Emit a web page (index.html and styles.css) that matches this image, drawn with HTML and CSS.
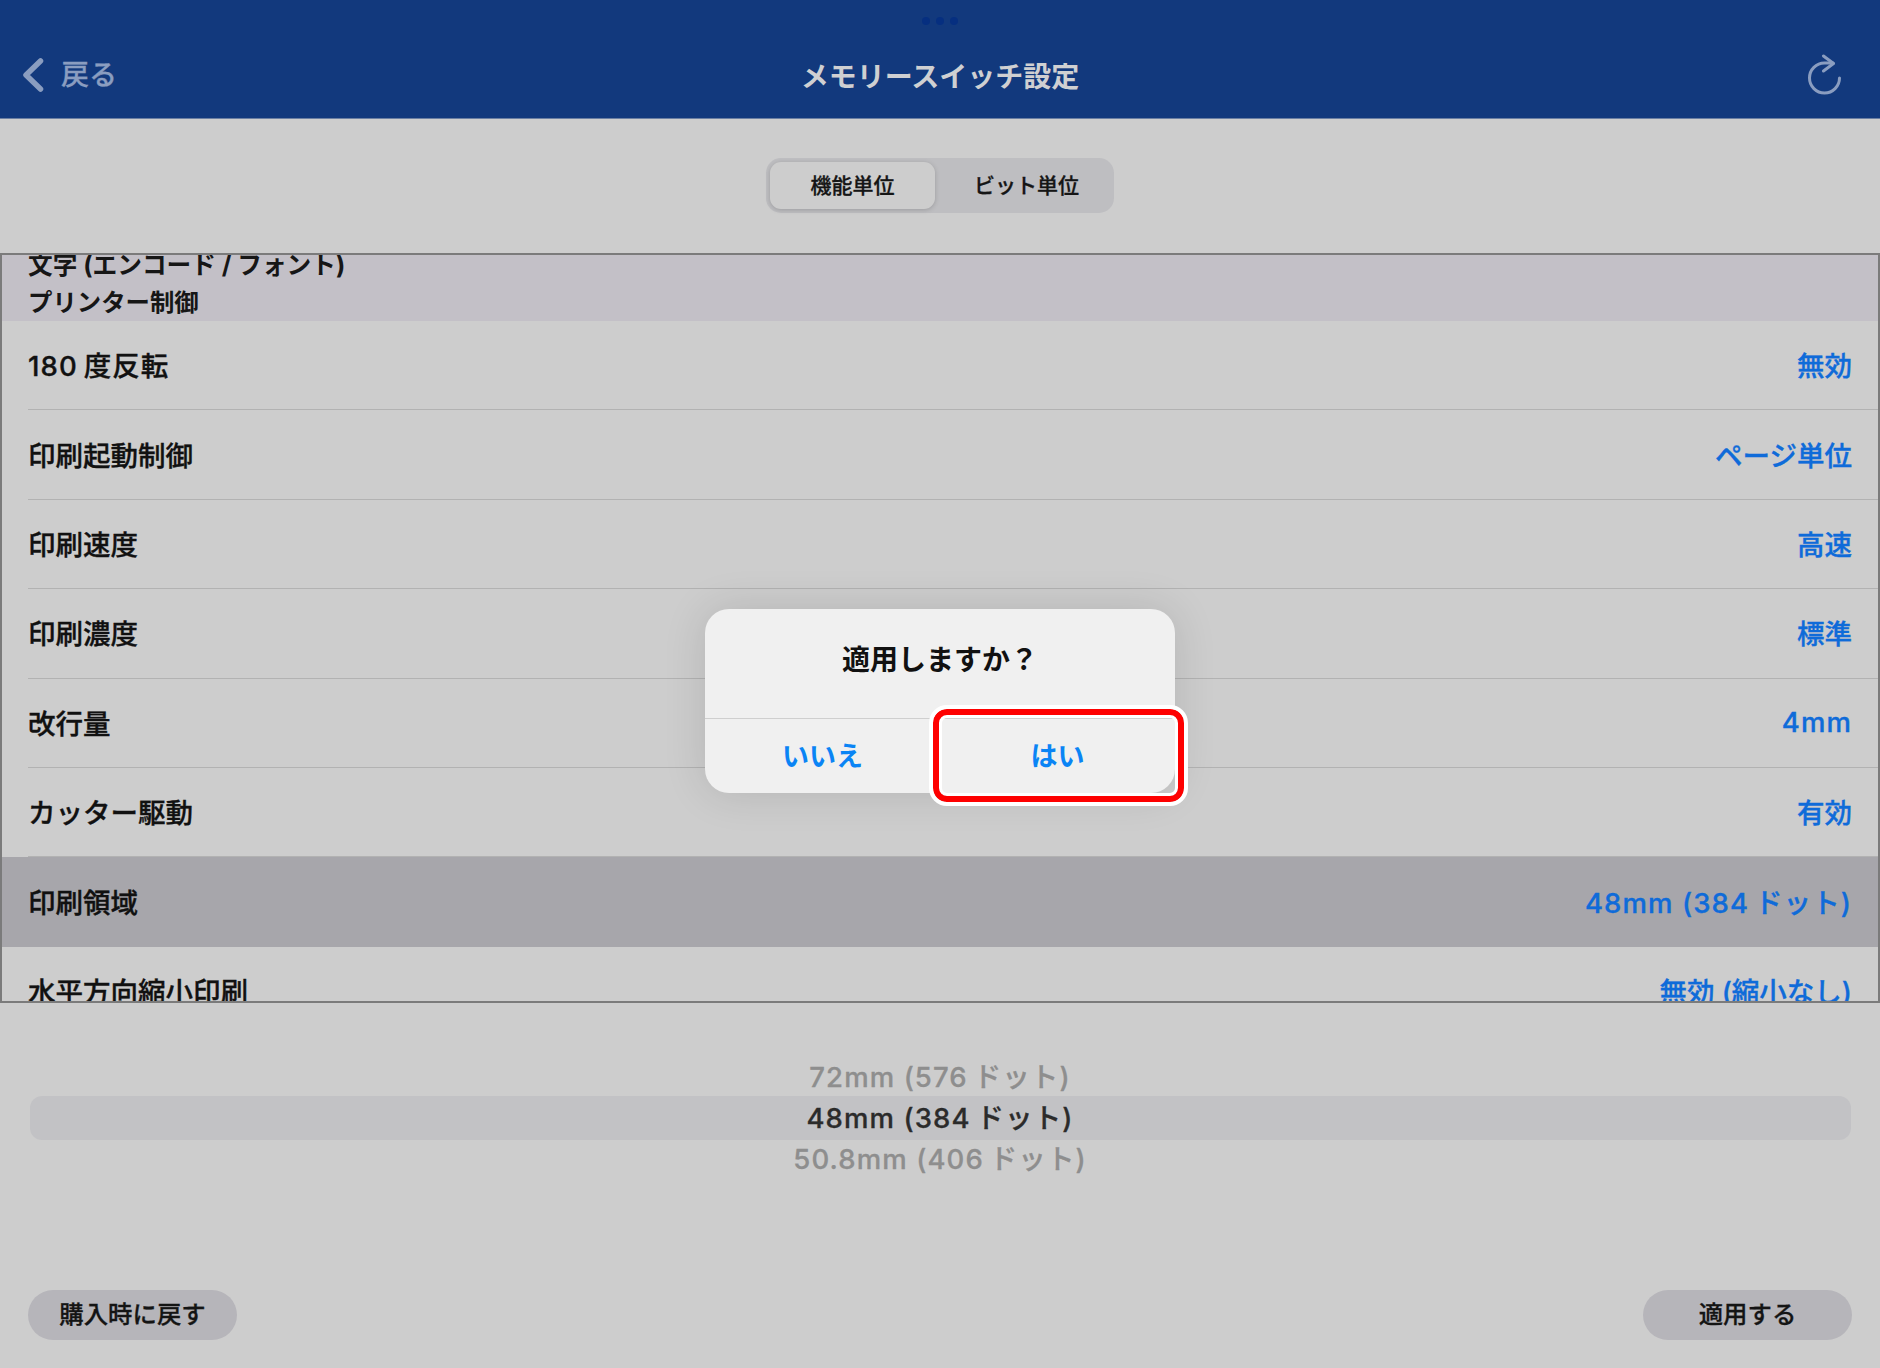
FILE: index.html
```html
<!DOCTYPE html>
<html lang="ja">
<head>
<meta charset="utf-8">
<title>メモリースイッチ設定</title>
<link rel="stylesheet" href="styles.css">
</head>
<body>
<div class="app">
  <header class="nav">
    <div class="dots"><i></i><i></i><i></i></div>
    <div class="nav-row">
      <div class="back">
        <svg class="chev" width="22" height="34" viewBox="0 0 22 34"><path d="M18.5 3 L4 17 L18.5 31" fill="none" stroke="#8a9dc0" stroke-width="5.5" stroke-linecap="round" stroke-linejoin="round"/></svg>
        <span>戻る</span>
      </div>
      <h1 class="title">メモリースイッチ設定</h1>
      <svg class="refresh" width="36" height="42" viewBox="0 0 36 42"><path d="M33.5 24 A15 15 0 1 1 18.5 9 H27" fill="none" stroke="#8a9dc0" stroke-width="3" stroke-linecap="round"/><path d="M17.5 2 L27.5 9.5 L17.5 17" fill="none" stroke="#8a9dc0" stroke-width="3" stroke-linecap="round" stroke-linejoin="round"/></svg>
    </div>
  </header>

  <div class="seg-wrap">
    <div class="seg">
      <div class="seg-item seg-on">機能単位</div>
      <div class="seg-item seg-off">ビット単位</div>
    </div>
  </div>

  <section class="list">
    <div class="sect">
      <div class="sect-a">文字 (エンコード / フォント)</div>
      <div class="sect-b">プリンター制御</div>
    </div>
    <div class="row"><div class="row-in"><span class="lat">180&#8201;度反転</span><span class="val">無効</span></div></div>
    <div class="row"><div class="row-in"><span>印刷起動制御</span><span class="val">ページ単位</span></div></div>
    <div class="row"><div class="row-in"><span>印刷速度</span><span class="val">高速</span></div></div>
    <div class="row"><div class="row-in"><span>印刷濃度</span><span class="val">標準</span></div></div>
    <div class="row"><div class="row-in"><span>改行量</span><span class="val lat">4mm</span></div></div>
    <div class="row"><div class="row-in"><span>カッター駆動</span><span class="val">有効</span></div></div>
    <div class="row row-sel"><div class="row-in"><span>印刷領域</span><span class="val lat">48mm (384&#8201;ドット)</span></div></div>
    <div class="row"><div class="row-in"><span>水平方向縮小印刷</span><span class="val">無効 (縮小なし)</span></div></div>
  </section>

  <div class="picker">
    <div class="band"></div>
    <div class="pick dim">72mm (576&#8201;ドット)</div>
    <div class="pick cur">48mm (384&#8201;ドット)</div>
    <div class="pick dim">50.8mm (406&#8201;ドット)</div>
  </div>

  <footer class="foot">
    <div class="pill">購入時に戻す</div>
    <div class="pill">適用する</div>
  </footer>

  <div class="dialog">
    <div class="dlg-title">適用しますか？</div>
    <div class="dlg-btns">
      <div class="dlg-btn">いいえ</div>
      <div class="dlg-btn">はい</div>
    </div>
    <div class="mark"></div>
  </div>
</div>
</body>
</html>
```

FILE: styles.css
```css
* { box-sizing: border-box; }
html, body { margin: 0; padding: 0; }
body {
  background: #cdcdcd;
  color: #111;
  font-family: Inter, "Noto Sans CJK JP", sans-serif;
  font-weight: 500;
}
.app {
  position: relative;
  width: 1880px;
  height: 1368px;
  overflow: hidden;
  display: flex;
  flex-direction: column;
}

/* Nav bar */
.nav {
  height: 119px;
  background: #12397d;
  border-bottom: 1px solid #6b7fa3;
  display: flex;
  flex-direction: column;
}
.dots {
  display: flex;
  justify-content: center;
  gap: 6px;
  padding-top: 17px;
}
.dots i { width: 8px; height: 8px; border-radius: 50%; background: #062f80; }
.nav-row {
  position: relative;
  display: flex;
  align-items: center;
  justify-content: space-between;
  height: 42px;
  margin-top: 29px;
  padding: 0 38px 0 22px;
}
.back {
  display: flex;
  align-items: center;
  gap: 17px;
  color: #8a9dc0;
  font-size: 28px;
  line-height: 36px;
  -webkit-text-stroke: .3px #8a9dc0;
}
.chev { display: block; }
.title {
  position: absolute;
  left: 0;
  right: 0;
  top: 2px;
  margin: 0;
  text-align: center;
  font-size: 28px;
  line-height: 42px;
  font-weight: 700;
  color: #cfd0d2;
}
.refresh { display: block; }

/* Segmented control */
.seg-wrap {
  height: 134px;
  padding-top: 39px;
  display: flex;
  justify-content: center;
}
.seg {
  width: 348px;
  height: 55px;
  padding: 4px;
  border-radius: 15px;
  background: #bebec1;
  display: flex;
}
.seg-item {
  flex: 1 1 0;
  display: flex;
  align-items: center;
  justify-content: center;
  font-size: 21px;
  line-height: 44px;
  border-radius: 11px;
  color: #151515;
  -webkit-text-stroke: .3px #151515;
}
.seg-on {
  flex: 0 0 165px;
  background: #cdcdcd;
  box-shadow: 0 1px 5px rgba(0,0,0,.18);
}
.seg-off { padding-left: 8px; }

/* List */
.list {
  height: 750px;
  border: 2px solid #7b7b7b;
  overflow: hidden;
}
.sect {
  height: 66px;
  padding-left: 26px;
  background: #c3c0c7;
  font-weight: 700;
  font-size: 24.4px;
  line-height: 38px;
  color: #161616;
}
.sect-a { height: 0; transform: translateY(-9px); font-size: 24.7px; }
.sect-b { padding-top: 28px; height: 66px; }
.row {
  height: 89.4px;
  padding-left: 26px;
  font-size: 27.5px;
  -webkit-text-stroke: .35px currentColor;
}
.row-in {
  height: 100%;
  display: flex;
  align-items: center;
  justify-content: space-between;
  padding: 0 26px 2px 0;
  border-bottom: 1px solid #b2b2b2;
}
.row-sel { background: #a7a6ab; }
.row-sel .row-in { border-bottom: 0; }
.val { color: #0f6bd9; }
.lat { letter-spacing: 1.1px; }

/* Picker */
.picker {
  position: relative;
  margin-top: 54px;
  display: flex;
  flex-direction: column;
  align-items: center;
  font-size: 27.5px;
  line-height: 41px;
  letter-spacing: 1.1px;
  -webkit-text-stroke: .3px currentColor;
}
.band {
  position: absolute;
  left: 30px;
  right: 29px;
  top: 39px;
  height: 44px;
  border-radius: 12px;
  background: #c2c2c5;
}
.pick { position: relative; height: 41px; }
.dim { color: #8e8e8e; }
.cur { color: #2b2b2b; }

/* Footer */
.foot {
  display: flex;
  justify-content: space-between;
  padding: 0 28px;
  margin-top: 110px;
}
.pill {
  width: 209px;
  height: 50px;
  border-radius: 25px;
  background: #b6b5ba;
  display: flex;
  align-items: center;
  justify-content: center;
  font-size: 24.4px;
  line-height: 46px;
  padding-bottom: 2px;
  color: #141414;
  -webkit-text-stroke: .3px #141414;
}

/* Alert */
.dialog {
  position: absolute;
  left: 705px;
  top: 609px;
  width: 470px;
  height: 184px;
  border-radius: 24px;
  background: #f0f0f0;
  box-shadow: 0 0 44px rgba(0,0,0,.12);
  display: flex;
  flex-direction: column;
}
.dlg-title {
  height: 110px;
  padding-top: 33px;
  text-align: center;
  font-size: 28px;
  line-height: 36px;
  font-weight: 700;
  color: #111;
  border-bottom: 1px solid #cfcfcf;
}
.dlg-btns { flex: 1; display: flex; padding-bottom: 3px; }
.dlg-btn {
  flex: 1 1 0;
  display: flex;
  align-items: center;
  justify-content: center;
  font-size: 27px;
  font-weight: 700;
  color: #0a84f5;
}
.mark {
  position: absolute;
  left: 228px;
  top: 100px;
  width: 251px;
  height: 93px;
  border: 6px solid #fe0000;
  border-radius: 14px;
  outline: 4px solid #fff;
  box-shadow: inset 0 0 0 3px #fff;
}
```
